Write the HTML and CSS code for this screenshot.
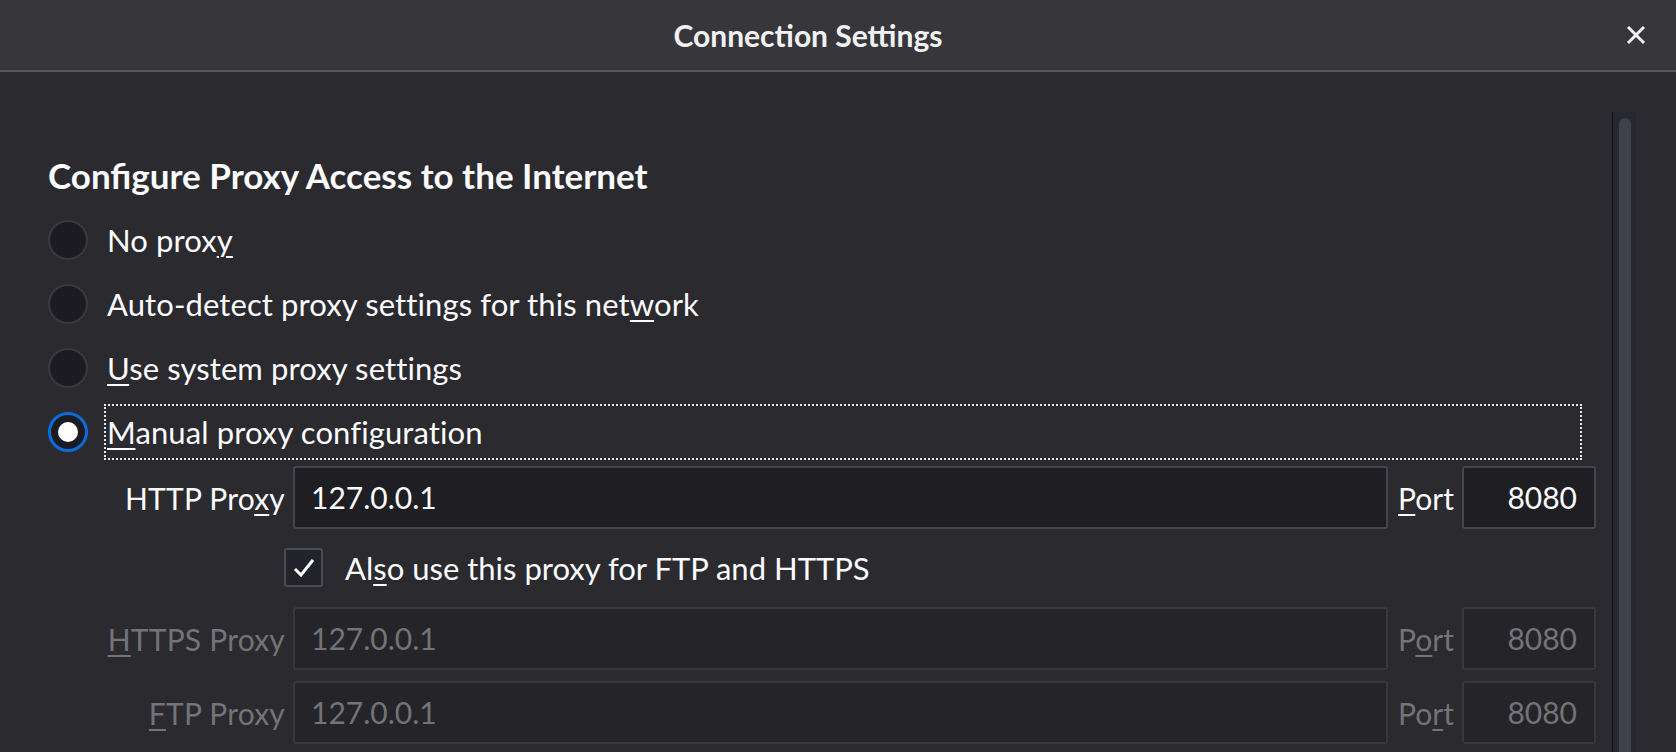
FILE: index.html
```html
<!DOCTYPE html>
<html lang="en">
<head>
  <meta charset="UTF-8">
  <title>Connection Settings</title>
  <link rel="stylesheet" href="styles.css">
</head>
<body>
<div class="titlebar">
  <div></div>
  <div class="title">Connection Settings</div>
  <div class="close">
    <svg width="20" height="20" viewBox="0 0 20 20"><path d="M2 2 L18 18 M18 2 L2 18" stroke="#f4f4f6" stroke-width="3" fill="none"/></svg>
  </div>
</div>

<div class="main">
  <div class="content">
    <h1>Configure Proxy Access to the Internet</h1>

    <div class="radio-row">
      <span class="radio"></span>
      <span class="radio-label">No prox<u>y</u></span>
    </div>
    <div class="radio-row">
      <span class="radio"></span>
      <span class="radio-label">Auto-detect proxy settings for this net<u>w</u>ork</span>
    </div>
    <div class="radio-row">
      <span class="radio"></span>
      <span class="radio-label"><u>U</u>se system proxy settings</span>
    </div>
    <div class="radio-row">
      <span class="radio checked"></span>
      <span class="radio-label focused"><u>M</u>anual proxy configuration</span>
    </div>

    <div class="proxy-grid">
      <span class="field-label">HTTP Pro<u>x</u>y</span>
      <div class="field">127.0.0.1</div>
      <span class="port-label"><u>P</u>ort</span>
      <div class="field port">8080</div>

      <div class="check-row">
        <span class="checkbox">
          <svg width="24" height="22" viewBox="0 0 24 22"><path d="M3 12 L9 18 L21 3" stroke="#fff" stroke-width="3" fill="none"/></svg>
        </span>
        <span>Al<u>s</u>o use this proxy for FTP and HTTPS</span>
      </div>

      <span class="field-label disabled"><u>H</u>TTPS Proxy</span>
      <div class="field disabled">127.0.0.1</div>
      <span class="port-label disabled">P<u>o</u>rt</span>
      <div class="field port disabled">8080</div>

      <span class="field-label disabled"><u>F</u>TP Proxy</span>
      <div class="field disabled">127.0.0.1</div>
      <span class="port-label disabled">Po<u>r</u>t</span>
      <div class="field port disabled">8080</div>
    </div>
  </div>
  <div class="scrollbar"><div class="thumb"></div></div>
</div>
</body>
</html>
```

FILE: styles.css
```css
body {
  margin: 0;
  background: #2a2a2f;
  color: #fbfbfe;
  font-family: Lato, "Noto Sans", sans-serif;
  height: 752px;
  overflow: hidden;
}
u {
  text-decoration-thickness: 2px;
  text-underline-offset: 4px;
}
.titlebar {
  height: 70px;
  background: #37363b;
  border-bottom: 2px solid #56555a;
  display: grid;
  grid-template-columns: 1fr auto 1fr;
  align-items: center;
}
.title {
  font-size: 30px;
  font-weight: bold;
  color: #f2f2f4;
  margin-right: 60px;
}
.close {
  justify-self: end;
  margin-right: 30px;
  height: 20px;
}
.main {
  display: flex;
  height: 680px;
}
.content {
  flex: 1;
  padding: 83px 16px 0 48px;
}
h1 {
  margin: 0 0 12px;
  font-size: 35px;
  line-height: 41px;
  font-weight: bold;
}
.radio-row {
  height: 64px;
  display: flex;
  align-items: center;
  font-size: 31px;
  letter-spacing: 0.1px;
}
.radio {
  width: 36px;
  height: 36px;
  border-radius: 50%;
  background: #1c1b21;
  border: 2px solid #3a393f;
  margin-right: 16px;
  flex-shrink: 0;
  display: flex;
  align-items: center;
  justify-content: center;
}
.radio.checked {
  width: 34px;
  height: 34px;
  border: 3px solid #0b6ddc;
}
.radio.checked::after {
  content: "";
  width: 20px;
  height: 20px;
  border-radius: 50%;
  background: #fff;
}
.radio-label {
  line-height: 52px;
  padding: 0 1px;
  border: 2px dotted transparent;
}
.radio-label.focused {
  flex: 1;
  margin-right: 14px;
  border-color: #e8e8ea;
}
.proxy-grid {
  margin-top: 2px;
  display: grid;
  grid-template-columns: 237px 1fr auto 134px;
  column-gap: 8px;
  row-gap: 11px;
  align-items: center;
  font-size: 30px;
}
.field-label {
  text-align: right;
  letter-spacing: 0.2px;
}
.port-label {
  padding-left: 2px;
}
.field {
  height: 59px;
  line-height: 59px;
  background: #1f1f23;
  border: 2px solid #46454b;
  border-radius: 3px;
  padding: 0 16px;
}
.field.port {
  text-align: right;
  padding-right: 17px;
}
.disabled {
  color: #737378;
}
.field.disabled {
  background: #252529;
  border-color: #38383d;
}
.check-row {
  grid-column: 2 / 5;
  margin: 8px 0 9px -9px;
  display: flex;
  align-items: center;
  height: 39px;
  font-size: 31px;
}
.checkbox {
  width: 35px;
  height: 35px;
  background: #22232c;
  border: 2px solid #4a4b55;
  border-radius: 3px;
  margin-right: 22px;
  display: flex;
  align-items: center;
  justify-content: center;
}
.scrollbar {
  width: 23px;
  margin: 40px 40px 0 0;
  background: #262831;
  border-left: 1px solid #101014;
  display: flex;
  justify-content: center;
  padding-top: 6px;
}
.thumb {
  width: 12px;
  height: 100%;
  background: #40424b;
  border-radius: 6px 6px 0 0;
}
```
